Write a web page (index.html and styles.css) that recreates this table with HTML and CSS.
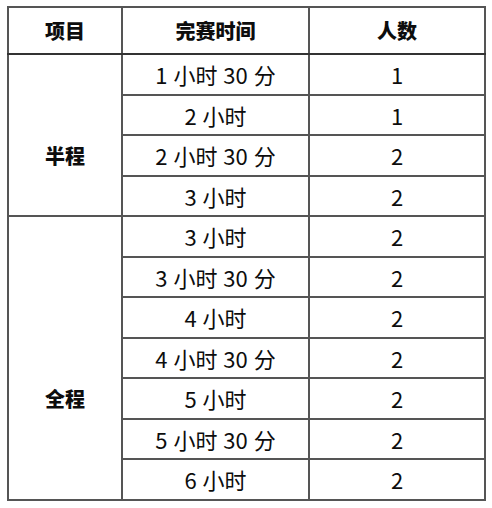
FILE: index.html
```html
<!DOCTYPE html>
<html lang="zh-CN">
<head>
<meta charset="utf-8">
<link rel="stylesheet" href="styles.css">
</head>
<body>
<table class="results">
  <colgroup>
    <col class="c1"><col class="c2"><col class="c3">
  </colgroup>
  <thead>
    <tr><th>项目</th><th>完赛时间</th><th>人数</th></tr>
  </thead>
  <tbody>
    <tr><td rowspan="4" class="group half">半程</td><td>1 小时 30 分</td><td>1</td></tr>
    <tr><td>2 小时</td><td>1</td></tr>
    <tr><td>2 小时 30 分</td><td>2</td></tr>
    <tr><td>3 小时</td><td>2</td></tr>
    <tr><td rowspan="7" class="group full">全程</td><td>3 小时</td><td>2</td></tr>
    <tr><td>3 小时 30 分</td><td>2</td></tr>
    <tr><td>4 小时</td><td>2</td></tr>
    <tr><td>4 小时 30 分</td><td>2</td></tr>
    <tr><td>5 小时</td><td>2</td></tr>
    <tr><td>5 小时 30 分</td><td>2</td></tr>
    <tr><td>6 小时</td><td>2</td></tr>
  </tbody>
</table>
</body>
</html>
```

FILE: styles.css
```css
html, body {
  margin: 0;
  padding: 0;
  background: #ffffff;
}
body {
  padding: 6px 7px;
  font-family: "Noto Sans CJK SC", "Noto Sans", sans-serif;
  color: #0d0d0d;
}
.results {
  border-collapse: collapse;
  width: 477px;
  border: 2px solid #1a1a1a;
  table-layout: fixed;
}
.c1 { width: 114px; }
.c2 { width: 187px; }
.c3 { width: 176px; }
.results th,
.results td {
  border: 2px solid #555;
  padding: 0;
  text-align: center;
  font-size: 22px;
  line-height: 28px;
}
.results th {
  font-weight: 900;
  font-size: 20px;
  height: 45px;
  border-bottom-color: #333;
}
.results td {
  font-weight: 400;
  height: 38.5px;
  word-spacing: 1px;
}
.results td.group {
  font-weight: 900;
  font-size: 20px;
  vertical-align: top;
}
.results td.half {
  padding-top: 87px;
}
.results td.full {
  padding-top: 168px;
}
```
